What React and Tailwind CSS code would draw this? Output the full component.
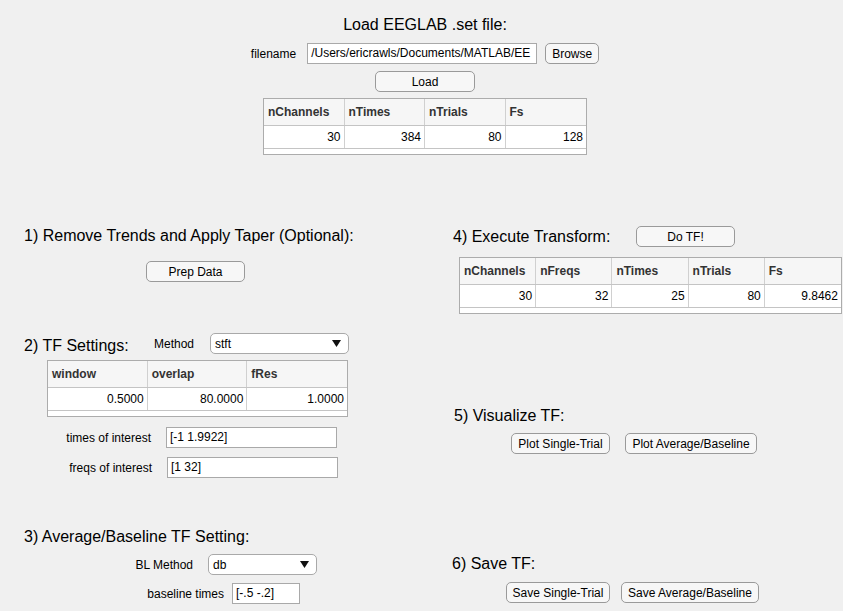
import React from 'react';

const Button = ({ label, w }) => (
  <button
    type="button"
    className={`block h-[21px] ${w} shrink-0 rounded-[5px] border border-[#9a9a9a] bg-[#f7f7f7] text-[12px] leading-none text-black`}
  >
    {label}
  </button>
);

const TextBox = ({ value, w }) => (
  <div className={`h-[21px] ${w} shrink-0 border border-[#a9a9a9] bg-white px-[3px] text-[12px] leading-[19px] whitespace-nowrap overflow-hidden`}>
    {value}
  </div>
);

const Dropdown = ({ value, w }) => (
  <div className={`flex h-[21px] ${w} shrink-0 items-center justify-between rounded-[5px] border border-[#a9a9a9] bg-white pl-[4px] pr-[7px] text-[12px]`}>
    <span>{value}</span>
    <svg width="9" height="7" viewBox="0 0 9 7">
      <polygon points="0,0 9,0 4.5,7" fill="#111" />
    </svg>
  </div>
);

function DataTable({ columns, values, w, colW }) {
  return (
    <div className={`${w} border border-[#acacac] bg-white text-[12px]`}>
      <div className="flex h-[27px] border-b border-[#c4c4c4] bg-[#f6f6f6]">
        {columns.map((c, i) => (
          <div
            key={c}
            className={`${colW} flex items-center pl-[4px] font-bold text-[#333] ${i < columns.length - 1 ? 'border-r border-[#d0d0d0]' : ''}`}
          >
            {c}
          </div>
        ))}
      </div>
      <div className="flex h-[23px] border-b border-[#c4c4c4]">
        {values.map((v, i) => (
          <div
            key={i}
            className={`${colW} flex items-center justify-end pr-[3px] ${i < values.length - 1 ? 'border-r border-[#d0d0d0]' : ''}`}
          >
            {v}
          </div>
        ))}
      </div>
      <div className="h-[5px]" />
    </div>
  );
}

const Heading = ({ children, className = '' }) => (
  <div className={`h-[20px] text-[16px] leading-[20px] whitespace-nowrap ${className}`}>{children}</div>
);

export default function App() {
  return (
    <div className="h-[611px] w-[843px] overflow-hidden bg-[#f0f0f0] font-['Liberation_Sans',Arial,sans-serif] text-black">
      {/* load file */}
      <div className="flex flex-col items-center pl-[7px] pt-[15px]">
        <Heading>Load EEGLAB .set file:</Heading>
        <div className="mt-[8px] flex items-center">
          <span className="mr-[11px] text-[12px]">filename</span>
          <TextBox value="/Users/ericrawls/Documents/MATLAB/EE" w="w-[230px]" />
          <div className="ml-[8px]">
            <Button label="Browse" w="w-[54px]" />
          </div>
        </div>
        <div className="mt-[7px]">
          <Button label="Load" w="w-[100px]" />
        </div>
        <div className="mt-[6px]">
          <DataTable
            columns={['nChannels', 'nTimes', 'nTrials', 'Fs']}
            values={['30', '384', '80', '128']}
            w="w-[324px]"
            colW="w-[81px]"
          />
        </div>
      </div>

      <div className="mt-[71px] flex">
        {/* left column */}
        <div className="w-[428px] shrink-0 pl-[24px]">
          <Heading>1) Remove Trends and Apply Taper (Optional):</Heading>
          <div className="ml-[122px] mt-[15px]">
            <Button label="Prep Data" w="w-[99px]" />
          </div>

          <div className="mt-[51px] flex items-center">
            <Heading className="w-[130px] pt-[2px]">2) TF Settings:</Heading>
            <span className="w-[56px] text-[12px]">Method</span>
            <Dropdown value="stft" w="w-[139px]" />
          </div>
          <div className="ml-[23px] mt-[6px]">
            <DataTable
              columns={['window', 'overlap', 'fRes']}
              values={['0.5000', '80.0000', '1.0000']}
              w="w-[301px]"
              colW="w-[100px]"
            />
          </div>
          <div className="mt-[10px] flex items-center">
            <span className="w-[127px] text-right text-[12px]">times of interest</span>
            <div className="ml-[15px]">
              <TextBox value="[-1 1.9922]" w="w-[171px]" />
            </div>
          </div>
          <div className="mt-[9px] flex items-center">
            <span className="w-[128px] text-right text-[12px]">freqs of interest</span>
            <div className="ml-[15px]">
              <TextBox value="[1 32]" w="w-[171px]" />
            </div>
          </div>

          <Heading className="mt-[49px]">3) Average/Baseline TF Setting:</Heading>
          <div className="mt-[7px] flex items-center">
            <span className="w-[169px] text-right text-[12px]">BL Method</span>
            <div className="ml-[15px]">
              <Dropdown value="db" w="w-[109px]" />
            </div>
          </div>
          <div className="mt-[8px] flex items-center">
            <span className="w-[200px] text-right text-[12px]">baseline times</span>
            <div className="ml-[8px]">
              <TextBox value="[-.5 -.2]" w="w-[68px]" />
            </div>
          </div>
        </div>

        {/* right column */}
        <div className="ml-[24px] flex-1">
          <div className="flex items-center">
            <Heading className="w-[184px] pl-[1px]">4) Execute Transform:</Heading>
            <Button label="Do TF!" w="w-[99px]" />
          </div>
          <div className="ml-[7px] mt-[10px]">
            <DataTable
              columns={['nChannels', 'nFreqs', 'nTimes', 'nTrials', 'Fs']}
              values={['30', '32', '25', '80', '9.8462']}
              w="w-[383px]"
              colW="w-[76.2px]"
            />
          </div>

          <Heading className="mt-[92px] pl-[2px]">5) Visualize TF:</Heading>
          <div className="ml-[59px] mt-[7px] flex gap-[15px]">
            <Button label="Plot Single-Trial" w="w-[99px]" />
            <Button label="Plot Average/Baseline" w="w-[132px]" />
          </div>

          <Heading className="mt-[100px]">6) Save TF:</Heading>
          <div className="ml-[54px] mt-[8px] flex gap-[11px]">
            <Button label="Save Single-Trial" w="w-[104px]" />
            <Button label="Save Average/Baseline" w="w-[138px]" />
          </div>
        </div>
      </div>
    </div>
  );
}
